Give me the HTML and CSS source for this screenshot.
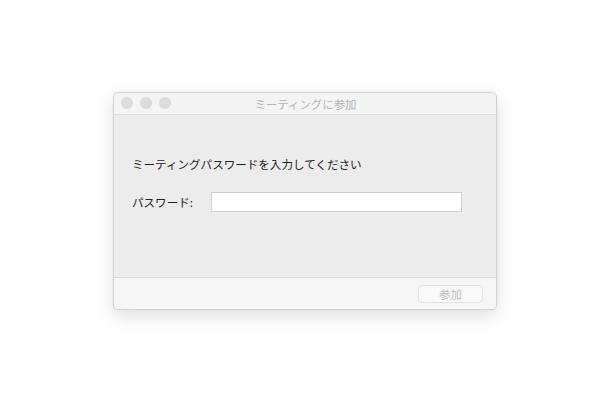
FILE: index.html
```html
<!DOCTYPE html>
<html lang="ja">
<head>
<meta charset="utf-8">
<link rel="stylesheet" href="styles.css">
</head>
<body>
<div class="window">
  <div class="titlebar">
    <div class="lights"><span class="light"></span><span class="light"></span><span class="light"></span></div>
    <div class="title">ミーティングに参加</div>
  </div>
  <div class="content">
    <p class="prompt">ミーティングパスワードを入力してください</p>
    <div class="row">
      <label class="label">パスワード:</label>
      <div class="input"></div>
    </div>
  </div>
  <div class="footer">
    <div class="button">参加</div>
  </div>
</div>
</body>
</html>
```
FILE: styles.css
```css
html, body { margin: 0; padding: 0; background: #ffffff; }
body {
  width: 600px; height: 413px; overflow: hidden;
  font-family: "Noto Sans CJK JP", "Noto Sans", sans-serif;
  padding: 92px 0 0 113px; box-sizing: border-box;
}
.window {
  width: 384px; height: 218px; box-sizing: border-box;
  border: 1px solid #d2d2d2; border-radius: 5px;
  background: #ececec;
  box-shadow: 0 6px 18px rgba(0,0,0,0.13), 0 0 2px rgba(0,0,0,0.05);
  display: flex; flex-direction: column; overflow: hidden;
}
.titlebar {
  height: 21px; flex: none; position: relative;
  background: #f4f4f4; border-bottom: 1px solid #dcdcdc;
  display: flex; align-items: center; justify-content: center;
}
.lights { position: absolute; left: 7px; top: 4px; display: flex; gap: 7px; }
.light { width: 12px; height: 12px; border-radius: 50%; background: #dcdcdc; display: block; }
.title { font-size: 11.4px; color: #b4b4b4; line-height: 16px; margin-left: 1px; }
.content { flex: 1; padding: 41px 0 0 18px; }
.prompt { margin: 0; font-size: 11.55px; line-height: 16px; color: #222222; }
.row { display: flex; align-items: center; margin-top: 20px; }
.label { width: 79px; flex: none; font-size: 11.55px; line-height: 16px; color: #222222; }
.input {
  width: 251px; height: 20px; box-sizing: border-box;
  background: #ffffff; border: 1px solid #d0d0d0;
}
.footer {
  height: 32px; flex: none; box-sizing: border-box;
  background: #f6f6f6; border-top: 1px solid #dadada;
  display: flex; justify-content: flex-end; align-items: flex-start;
  padding: 7px 13px 0 0;
}
.button {
  width: 65px; height: 18px; box-sizing: border-box;
  border: 1px solid #e2e2e2; border-radius: 4px; background: #f9f9f9;
  font-size: 11.4px; line-height: 16px; color: #bdbdbd; text-align: center;
}
```
